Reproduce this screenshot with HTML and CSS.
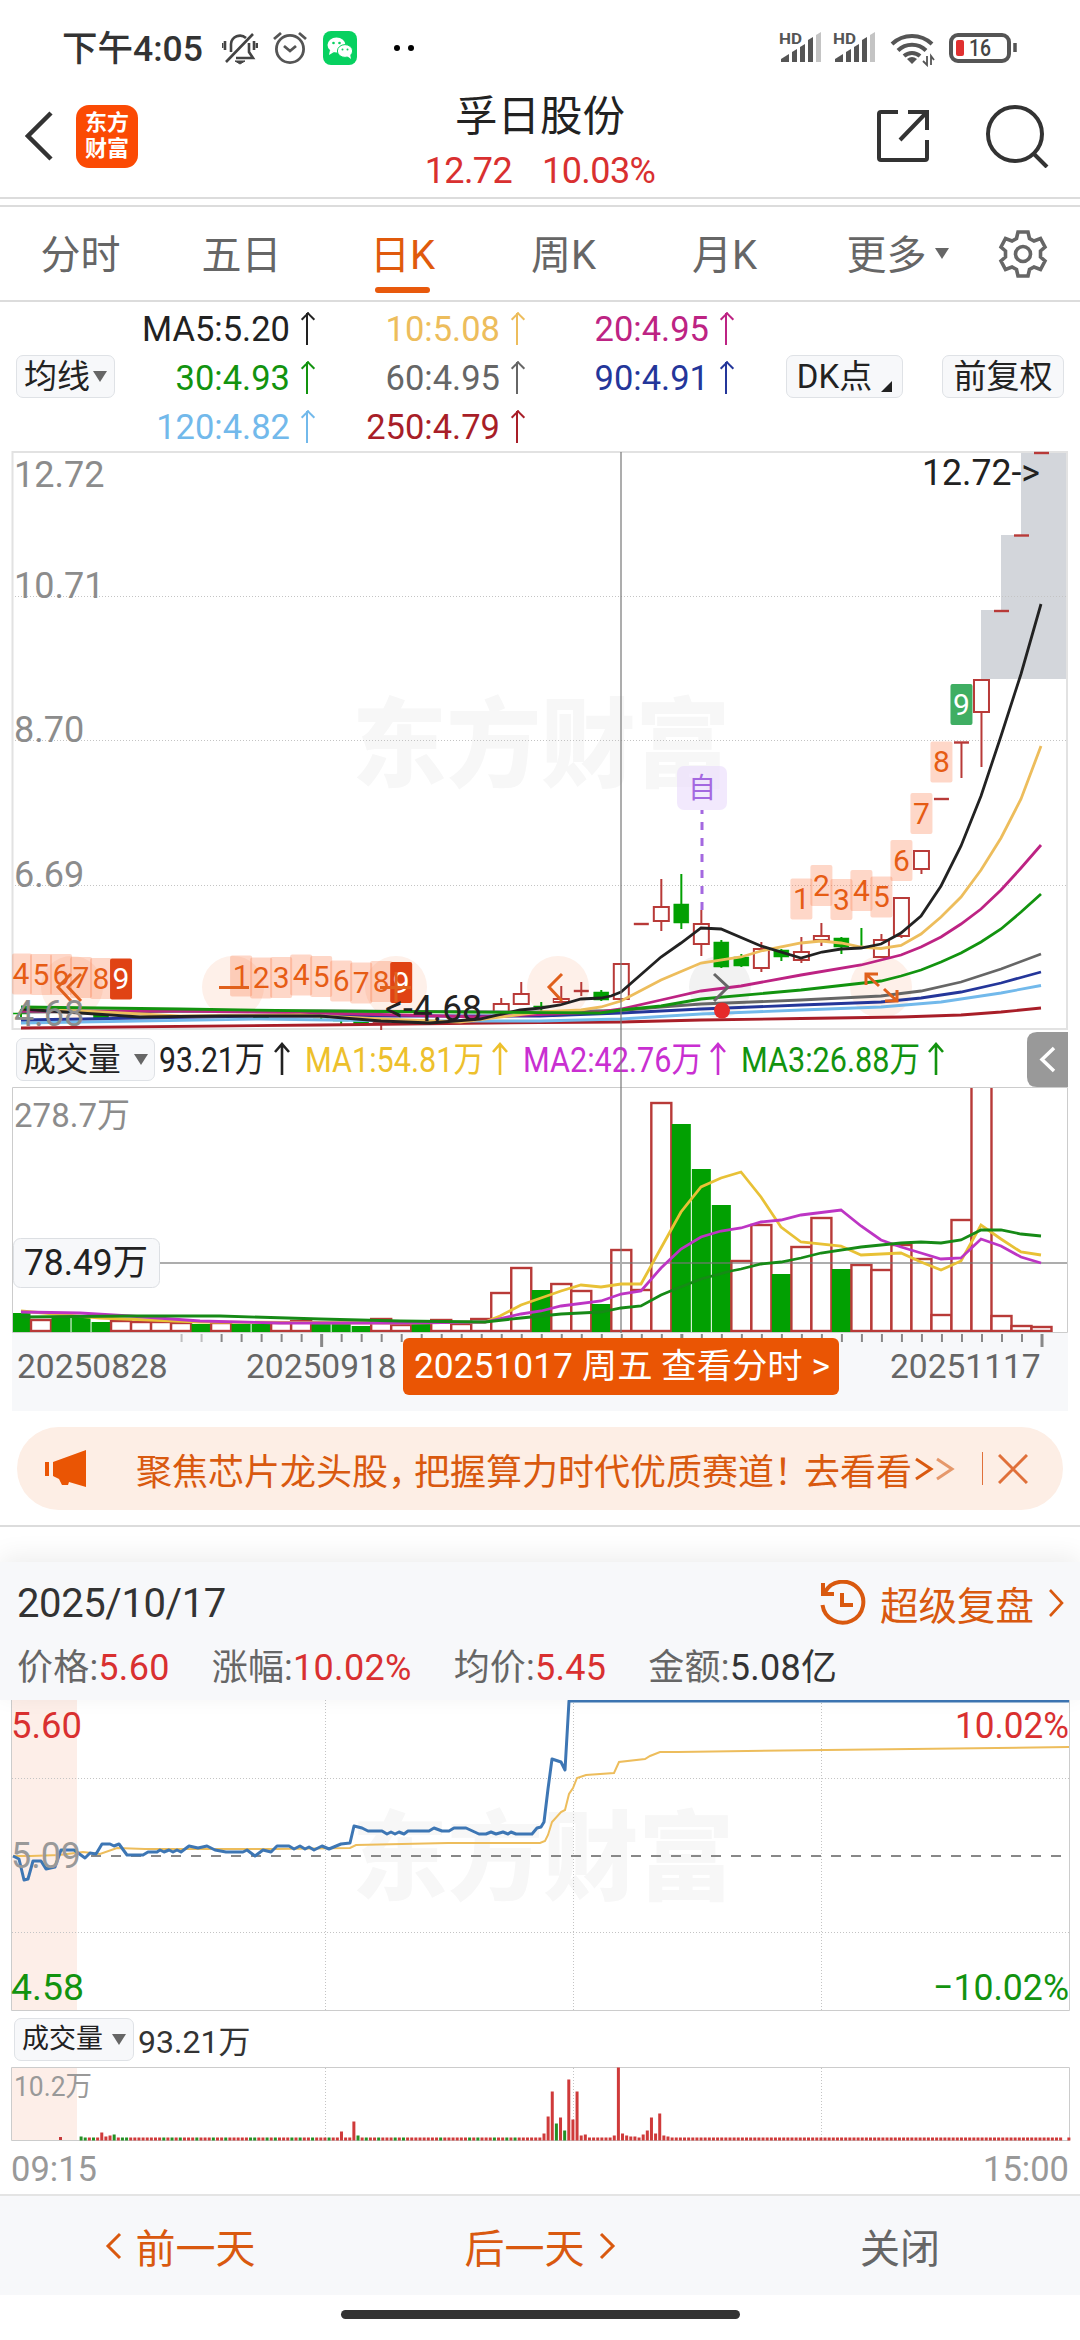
FILE: index.html
```html
<!DOCTYPE html>
<html lang="zh-CN">

<head>
	<meta charset="utf-8">
	<meta name="viewport" content="width=device-width, initial-scale=1.0">

	<title>孚日股份</title>

	<link rel="stylesheet" href="styles.css">
</head>

<body>
	<div class="status">
		<span class="clock">下午4:05</span>
		<svg class="bell" width="36" height="34" viewBox="0 0 36 34" fill="none" stroke="#444" stroke-width="2.6">
			<path d="M9 21V13a9 9 0 0 1 15-6M27 12v9l4 6H14M31 3 4 31M3 10v9M32 10v9M0 12v5M35 12v5" />
			<path d="M13 30h10l-5 3z" fill="#444" stroke-width="1" />
		</svg>
		<svg class="alarm" width="36" height="34" viewBox="0 0 36 34" fill="none" stroke="#555" stroke-width="2.8">
			<circle cx="18" cy="18" r="13.6" />
			<path d="M2 8 9 2M34 8l-7-6M12 15l6 5 6-5" />
		</svg>
		<svg class="wechat" width="34" height="34" viewBox="0 0 34 34">
			<rect width="34" height="34" rx="8" fill="#07d160" />
			<ellipse cx="13.500" cy="14" rx="9" ry="7.600" fill="#fff" />
			<path d="m7 19-1 5 5-3z" fill="#fff" />
			<ellipse cx="22" cy="20" rx="7.600" ry="6.400" fill="#fff" stroke="#07d160" />
			<path d="m24 25 4 3-1-5z" fill="#fff" />
			<g fill="#07d160"><circle cx="10.500" cy="12" r="1.300" /><circle cx="16.500" cy="12" r="1.300" /><circle cx="19.500" cy="18.500" r="1" /><circle cx="24.500" cy="18.500" r="1" /></g>
		</svg>
		<svg class="dots" width="24" height="8"><circle cx="4" cy="4" r="3" /><circle cx="18" cy="4" r="3" /></svg>
		<svg class="radio" width="242" height="38" viewBox="778 28 242 38">
			<g id="signal">
				<text x="779" y="42.500" class="hd" textLength="23">HD</text>
				<g fill="#555"><path d="M781 61v-3l8-5v8z" /><path d="M792 61V51l5-3v13z" /><path d="M800 61V46l5-3v18z" /><path d="M808 61V39l5-3v25z" /></g>
				<path d="M816 61V34l5-3v30z" fill="#c4c4c4" />
			</g>
			<use href="#signal" x="54" />
			<g fill="none" stroke="#555" stroke-width="4"><path d="M892 43a29 29 0 0 1 40 0M898 49.500a20 20 0 0 1 28 0M904 55a12 12 0 0 1 16 0" /></g>
			<path d="m907 58q5-4 10 0l-5 5z" fill="#555" />
			<path d="M927 55v9l-4-4M931 64v-9l3 4" fill="none" stroke="#555" stroke-width="1.800" />
			<rect x="951" y="34" width="58" height="26" rx="7" fill="none" stroke="#555" stroke-width="4" />
			<rect x="956" y="39" width="8" height="16" rx="2" fill="#e03030" />
			<path d="M1015 42v9" stroke="#555" stroke-width="3.500" />
			<text x="969" y="55" class="battery" textLength="22">16</text>
		</svg>
	</div>

	<header class="header">
		<svg width="28" height="52" viewBox="0 0 28 52" fill="none" stroke="#333" stroke-width="4.500"><path d="M26 3 3 26l23 23" /></svg>
		<div class="logo">东方<br>财富</div>
		<div class="stock">
			<h1>孚日股份</h1>
			<p><span>12.72</span><span>10.03%</span></p>
		</div>
		<svg class="share" width="54" height="54" viewBox="0 0 54 54" fill="none" stroke="#333" stroke-width="4"><path d="M22 3H5Q3 3 3 5V49Q3 51 5 51H49Q51 51 51 49V31M32 3H51V21M50 4 24 31" /></svg>
		<svg class="search" width="64" height="64" viewBox="0 0 64 64" fill="none" stroke="#333" stroke-width="4"><circle cx="30" cy="30" r="27" /><path d="m48 49 14 14" /></svg>
	</header>

	<nav class="tabs">
		<a>分时</a>
		<a>五日</a>
		<a class="active">日K</a>
		<a>周K</a>
		<a>月K</a>
		<a class="more">更多<i class="caret"></i></a>
		<svg width="50" height="50" viewBox="-25 -25 50 50" fill="none" stroke="#666" stroke-width="3.600">
			<path d="M-5-22H5L6.500-15.500 11-13 17.500-15.500 22-7 17.500-3V3L22 7 17.500 15.500 11 13 6.500 15.500 5 22H-5L-6.500 15.500-11 13-17.500 15.500-22 7-17.500 3V-3L-22-7-17.500-15.500-11-13-6.500-15.500Z" />
			<circle r="7.500" />
		</svg>
	</nav>

	<section class="averages">
		<button class="chip chip-ma">均线<i class="caret"></i></button>
		<div class="ma-grid">
			<span class="ma5">MA5:5.20<i class="up"></i></span>
			<span class="ma10">10:5.08<i class="up"></i></span>
			<span class="ma20">20:4.95<i class="up"></i></span>
			<span class="ma30">30:4.93<i class="up"></i></span>
			<span class="ma60">60:4.95<i class="up"></i></span>
			<span class="ma90">90:4.91<i class="up"></i></span>
			<span class="ma120">120:4.82<i class="up"></i></span>
			<span class="ma250">250:4.79<i class="up"></i></span>
		</div>
		<button class="chip chip-dk">DK点<i class="corner"></i></button>
		<button class="chip chip-fq">前复权</button>
	</section>

	<!-- daily candles -->
	<svg class="chart" width="1080" height="579" viewBox="0 452 1080 579">
		<text class="watermark" x="352" y="780" textLength="378">东方财富</text>
		<g fill="#d3d6db"><path d="M1021 453h46v227h-86v-69h20v-75h20z" /></g>
		<path class="dotted" d="M12 597.500H1067M12 741.500H1067M12 886.500H1067" />
		<path d="M12.500 1030V453H1067V1030Z" fill="none" stroke="#e2e2e2" stroke-width="2" />
		<g fill="#fef0e9"><circle cx="72" cy="988" r="31" /><circle cx="233" cy="988" r="31" /><circle cx="396" cy="988" r="31" /><circle cx="558" cy="988" r="31" /><circle cx="881" cy="988" r="31" /></g>
		<circle cx="720" cy="988" r="31" fill="#f2f2f2" />
		<g id="candles"></g>
		<g id="tags"></g>
		<g id="ma-lines" fill="none" stroke-width="2.800"></g>
		<g fill="none" stroke="#e0601c" stroke-width="3">
			<path d="M71 975 58 988l13 14M81 975 68 988l13 14M219 988.500h30M380 988.500h31M396 973v30M562 975 549 988l13 14" />
			<path d="M866 986V975h12M867 976l12 11M897 991v11h-12M896 1001l-12-11" />
			<path d="M714 975l14 13-14 14" stroke="#666" />
		</g>
		<circle cx="722" cy="1011.500" r="8" fill="#e52a2a" />
		<path d="M702 811V911" stroke="#a468e0" stroke-width="3" stroke-dasharray="8 8" stroke-dashoffset="4" />
		<rect x="677" y="767" width="50" height="44" rx="7" fill="#e9dbfb" fill-opacity=".6" />
		<text x="688" y="799" font-size="28" fill="#a468e0">自</text>
		<g class="scale">
			<text x="14" y="488">12.72</text>
			<text x="14" y="599">10.71</text>
			<text x="14" y="743">8.70</text>
			<text x="14" y="888">6.69</text>
			<text x="14" y="1027">4.68</text>
		</g>
		<text x="922" y="486" class="mark" textLength="118">12.72-&gt;</text>
		<text x="385" y="1022" class="mark" textLength="97">&lt;-4.68</text>
		<path d="M621 453V1031" class="cross" />
	</svg>

	<section class="vol-head">
		<button class="chip chip-vol">成交量<i class="caret"></i></button>
		<svg width="1080" height="58" viewBox="156 1030 1080 58">
			<g class="vol-ma">
				<text x="159" y="1072" fill="#222" textLength="106">93.21万</text>
				<text x="305" y="1072" fill="#edc02c" textLength="179">MA1:54.81万</text>
				<text x="523" y="1072" fill="#c92fd1" textLength="179">MA2:42.76万</text>
				<text x="741" y="1072" fill="#12930f" textLength="179">MA3:26.88万</text>
			</g>
			<g fill="none" stroke-width="2.600">
				<path d="M282 1075V1045M275 1052l7-8 7 8" stroke="#222" />
				<path d="M500 1075V1045M493 1052l7-8 7 8" stroke="#edc02c" />
				<path d="M718 1075V1045M711 1052l7-8 7 8" stroke="#c92fd1" />
				<path d="M936 1075V1045M929 1052l7-8 7 8" stroke="#12930f" />
			</g>
			<path d="M621 1030V1088" class="cross" />
			<path d="M1068 1032h-31q-10 0-10 10v35q0 10 10 10h31z" fill="#999" />
			<path d="m1054 1048-12 11.500 12 11.500" fill="none" stroke="#fff" stroke-width="3.500" />
		</svg>
	</section>

	<!-- daily volume and date axis -->
	<svg class="chart" width="1080" height="324" viewBox="0 1088 1080 324">
		<rect x="12" y="1334" width="1056" height="78" fill="#f7f8fa" />
		<path d="M12.500 1333.500V1088.500H1067.500V1333.500Z" fill="none" stroke="#ccc" />
		<clipPath id="vol-clip"><rect x="13" y="1089" width="1054" height="244" /></clipPath>
		<g id="volumes" clip-path="url(#vol-clip)"></g>
		<path d="M621 1088V1334M160 1264H1067" class="cross" />
		<g id="vol-lines" fill="none" stroke-width="2.800"></g>
		<g id="ticks" stroke="#888" stroke-width="2"></g>
		<text x="14" y="1128" font-size="34" fill="#8c8c8c" textLength="116">278.7万</text>
		<rect x="13.500" y="1239.500" width="146" height="49" rx="7" fill="#f7f8fa" stroke="#dcdfe3" />
		<text x="24" y="1276" font-size="36" fill="#222" textLength="124">78.49万</text>
		<g font-size="33.500" fill="#666">
			<text x="17" y="1379">20250828</text>
			<text x="246" y="1379">20250918</text>
			<text x="890" y="1379">20251117</text>
		</g>
		<rect x="403" y="1339" width="436" height="57" rx="6" fill="#ea5504" />
		<text x="414" y="1379" font-size="34.500" fill="#fff" textLength="416">20251017 周五 查看分时 &gt;</text>
	</svg>

	<div class="banner">
		<svg width="44" height="40" viewBox="43 1450 44 40" fill="#ea5504"><path d="M45 1463h4v14h-4zM53 1463l33-12v37l-17-5-1 3h-6l-3-6-6-3z" /></svg>
		<p>聚焦芯片龙头股<i class="comma">，</i>把握算力时代优质赛道<i class="bang">！</i>去看看<svg width="40" height="24" viewBox="0 0 40 24" fill="none" stroke-width="3"><path d="m1 2 15 10L1 22" stroke="#d9590f" /><path d="m22 2 15 10-15 10" stroke="#e5986b" /></svg></p>
		<svg class="close" width="30" height="30" viewBox="0 0 30 30" fill="none" stroke="#e0703a" stroke-width="3"><path d="m1 1 28 28M29 1 1 29" /></svg>
	</div>

	<section class="day">
		<div class="day-head">
			<h2>2025/10/17</h2>
			<a class="replay">
				<svg width="46" height="46" viewBox="0 0 46 46" fill="none" stroke="#d9590f" stroke-width="4"><path d="M5 12A20.500 20.500 0 1 1 2.500 25M3 3v11h11M22 13v12h11" /></svg>
				超级复盘
				<svg width="16" height="30" viewBox="0 0 16 30" fill="none" stroke="#d9590f" stroke-width="2.600"><path d="m2 2 12 13L2 28" /></svg>
			</a>
		</div>
		<p class="day-stats">
			<span>价格:<b class="red">5.60</b></span>
			<span>涨幅:<b class="red">10.02%</b></span>
			<span>均价:<b class="red">5.45</b></span>
			<span>金额:<b>5.08亿</b></span>
		</p>
	</section>

	<svg class="chart" width="1080" height="311" viewBox="0 1701 1080 311">
		<rect x="12" y="1701" width="65" height="310" fill="#fdeee8" />
		<text class="watermark" x="352" y="1893" textLength="382">东方财富</text>
		<path class="dotted" d="M12 1779.500H1069M12 1933.500H1069M325.500 1701V2011M573.500 1701V2011M821.500 1701V2011" />
		<path d="M11.500 1701V2011.500H1069.500V1701" fill="none" stroke="#ccc" />
		<path d="M91 1857H1062" stroke="#888" stroke-width="2" stroke-dasharray="10 10" />
		<polyline fill="none" stroke="#edbd5c" stroke-width="2" points="13,1857 31,1857 59,1856 83,1853 100,1855 117,1849 145,1850 275,1850 350,1849 356,1846 448,1844 540,1844 545,1842 548,1836 552,1823 561,1813 565,1811 569,1795 573,1789 577,1779 586,1776 614,1774 619,1763 645,1760 650,1757 660,1753 678,1753 826,1751 1069,1748" />
		<polyline fill="none" stroke="#3d76b4" stroke-width="3" stroke-linejoin="round" points="13,1857 19,1860 24,1881 28,1880 33,1862 41,1862 46,1870 55,1868 61,1851 74,1851 85,1859 90,1854 96,1855 102,1845 110,1845 114,1847 119,1845 127,1856 143,1856 148,1853 157,1853 160,1851 164,1853 169,1851 173,1853 177,1851 181,1853 189,1847 198,1849 207,1847 215,1851 226,1853 243,1853 247,1851 255,1857 263,1851 271,1853 277,1847 289,1847 294,1850 300,1847 305,1850 309,1848 314,1851 322,1847 329,1850 341,1845 350,1844 354,1827 362,1829 368,1832 382,1832 387,1835 391,1833 395,1835 399,1833 404,1835 408,1832 429,1832 434,1829 442,1832 449,1832 454,1829 466,1829 479,1835 486,1835 491,1833 496,1835 503,1833 508,1835 511,1833 516,1835 532,1835 537,1829 541,1828 544,1823 548,1790 552,1760 561,1763 565,1771 569,1702 1069,1702" />
		<g class="range">
			<text x="11" y="1739" fill="#d93030" textLength="71">5.60</text>
			<text x="11" y="1869" fill="#999" textLength="70">5.09</text>
			<text x="11" y="2001" fill="#12930f" textLength="73">4.58</text>
			<text x="955" y="1739" fill="#d93030" textLength="114">10.02%</text>
			<text x="933" y="2001" fill="#12930f" textLength="136">−10.02%</text>
		</g>
	</svg>

	<section class="min-head">
		<button class="chip chip-min">成交量<i class="caret"></i></button>
		<span>93.21万</span>
	</section>

	<svg class="chart" width="1080" height="74" viewBox="0 2068 1080 74">
		<rect x="12" y="2069" width="65" height="73" fill="#fdeee8" />
		<path class="dotted" d="M325.500 2069V2141M573.500 2069V2141M821.500 2069V2141" />
		<path d="M11.500 2141.500V2068.500H1069.500V2141.500Z" fill="none" stroke="#ccc" />
		<g id="minutes"></g>
		<text x="14" y="2097" font-size="28" fill="#999" textLength="78">10.2万</text>
	</svg>
	<div class="times"><span>09:15</span><span>15:00</span></div>

	<footer class="footer">
		<a><svg width="17" height="28" viewBox="0 0 17 28" fill="none" stroke="#d9590f" stroke-width="3"><path d="M15 2 3 14l12 12" /></svg>前一天</a>
		<a>后一天<svg width="17" height="28" viewBox="0 0 17 28" fill="none" stroke="#d9590f" stroke-width="3"><path d="m2 2 12 12L2 26" /></svg></a>
		<a class="dismiss">关闭</a>
	</footer>
	<div class="home"></div>

	<script src="chart.js"></script>
</body>

</html>
```
FILE: styles.css
```css
* {
	box-sizing: border-box;
}

body {
	background-color: #fff;
	color: #222;
	font-family: Roboto, 'Noto Sans CJK SC', sans-serif;
	margin: 0;
	overflow: hidden;
	width: 1080px;
}

h1, h2, p {
	font-weight: 400;
	margin: 0;
}

svg {
	display: block;
	flex: none;
}

text {
	font-family: Roboto, 'Noto Sans CJK SC', sans-serif;
}

.caret {
	border: 7px solid transparent;
	border-bottom-width: 0;
	border-top: 11px solid #666;
	display: inline-block;
}

/* status bar */
.status {
	align-items: center;
	display: flex;
	height: 80px;
	padding: 15px 60px 0 62px;
}
.clock {
	color: #333;
	font-size: 35.5px;
	font-weight: 500;
	line-height: 48px;
	padding-top: 2px;
	width: 160px;
}
.alarm {
	margin-left: 14px;
}
.wechat {
	margin-left: 15px;
}
.dots {
	margin-left: 36px;
}
.radio {
	margin-left: auto;
}
.hd {
	fill: #555;
	font-size: 15px;
	font-weight: 700;
}
.battery {
	fill: #444;
	font-size: 23px;
	font-weight: 500;
}

/* header */
.header {
	align-items: center;
	border-bottom: 2px solid #dcdcdc;
	display: flex;
	height: 119px;
	padding: 0 31px 0 25px;
}
.header > svg:first-child {
	margin-top: -5px;
}
.logo {
	background-color: #fb4a04;
	border-radius: 13px;
	color: #fff;
	font-size: 22px;
	font-weight: 700;
	height: 63px;
	line-height: 26px;
	margin: -5px 0 0 23px;
	padding-top: 5px;
	text-align: center;
	width: 62px;
}
.stock {
	flex: 1;
	padding: 5px 0 0 66px;
	text-align: center;
}
.stock h1 {
	font-size: 42.5px;
	line-height: 56px;
}
.stock p {
	color: #d93030;
	display: flex;
	font-size: 36px;
	gap: 30px;
	justify-content: center;
	letter-spacing: -.6px;
	line-height: 44px;
	margin-top: 4px;
}
.share {
	margin: -5px 55px 0 0;
}
.search {
	margin-top: -5px;
}

/* tabs */
.tabs {
	align-items: center;
	border-bottom: 2px solid #dcdcdc;
	border-top: 2px solid #dcdcdc;
	color: #666;
	display: grid;
	font-size: 40px;
	grid-template-columns: repeat(6, 161px) 1fr;
	height: 97px;
	justify-items: center;
	margin-top: 6px;
}
.tabs a {
	height: 93px;
	line-height: 98px;
}
.tabs .active {
	color: #e05a0c;
	display: flex;
	flex-direction: column;
}
.tabs .active::after {
	align-self: center;
	background-color: #e8590c;
	border-radius: 3px;
	content: '';
	flex: none;
	height: 6px;
	margin-top: -18px;
	width: 55px;
}
.tabs .more {
	padding-left: 24px;
	white-space: nowrap;
}
.tabs .more .caret {
	margin-left: 8px;
	vertical-align: 10px;
}

/* moving averages */
.averages {
	align-items: center;
	display: flex;
	height: 149px;
	padding: 0 16px;
}
.chip {
	align-items: center;
	background-color: #f7f8fa;
	border: 1px solid #dfe2e6;
	border-radius: 7px;
	color: #222;
	display: flex;
	flex: none;
	font: 33px Roboto, 'Noto Sans CJK SC', sans-serif;
	height: 43px;
	justify-content: center;
	line-height: 40px;
	padding: 0;
	white-space: nowrap;
}
.chip-ma {
	width: 99px;
}
.chip-ma .caret {
	margin-left: 3px;
}
.chip-dk {
	margin-left: 49px;
	width: 117px;
}
.chip-fq {
	margin-left: 39px;
	width: 122px;
}
.corner {
	align-self: flex-end;
	border-bottom: 11px solid #222;
	border-left: 11px solid transparent;
	margin: 0 0 5px 9px;
}
.ma-grid {
	display: grid;
	font-size: 34.5px;
	grid-template-columns: 201px 209px 209px;
	grid-template-rows: repeat(3, 49px);
	line-height: 49px;
	padding-top: 3px;
	width: 623px;
}
.ma-grid span {
	align-items: center;
	display: flex;
	justify-content: flex-end;
	white-space: nowrap;
}
.up {
	background: linear-gradient(currentColor, currentColor) center / 2px 100% no-repeat;
	display: inline-block;
	height: 32px;
	margin: 0 2px 0 11px;
	position: relative;
	width: 12px;
}
.up::before {
	border-left: 2px solid;
	border-top: 2px solid;
	content: '';
	height: 8px;
	left: 2px;
	position: absolute;
	top: 1px;
	transform: rotate(45deg);
	width: 8px;
}
.ma5, .ma30, .ma120 { margin-right: 1px; }
.ma10 { color: #edbd5c; }
.ma20 { color: #bd2383; }
.ma30 { color: #12930f; }
.ma60 { color: #666; }
.ma90 { color: #24369a; }
.ma120 { color: #72b9eb; }
.ma250 { color: #a81e28; }

/* charts */
.watermark {
	fill: #f7f7f7;
	font-size: 97px;
	font-weight: 900;
}
.dotted {
	fill: none;
	stroke: #c4c4c4;
	stroke-dasharray: 1 2;
}
.cross {
	stroke: #777;
	stroke-opacity: .6;
	stroke-width: 2;
}
.scale {
	fill: #8c8c8c;
	font-size: 36px;
}
.mark {
	fill: #222;
	font-size: 36px;
}
.tag {
	font-size: 30px;
	text-anchor: middle;
}
.range {
	font-size: 37px;
}
.vol-head {
	display: flex;
	height: 57px;
	overflow: hidden;
	padding-left: 16px;
}
.chip-vol {
	font-size: 32.5px;
	margin: 8px 1px 0 0;
	width: 139px;
}
.chip-vol .caret {
	margin-left: 13px;
}
.vol-ma {
	font-size: 35px;
}

/* banner */
.banner {
	align-items: center;
	background-color: #fdeee5;
	border-radius: 42px;
	color: #d9590f;
	display: flex;
	height: 83px;
	margin: 16px 17px 0;
	padding: 0 35px 0 26px;
}
.banner p {
	align-items: center;
	display: flex;
	flex: 1;
	font-size: 36px;
	margin-left: 49px;
	white-space: nowrap;
}
.banner p svg {
	margin-left: 3px;
}
.comma, .bang {
	font-style: normal;
	width: 26px;
}
.bang {
	width: 30px;
}
.banner::after {
	background-color: #e0703a;
	content: '';
	height: 33px;
	order: 1;
	width: 1px;
}
.banner .close {
	margin-left: 15px;
	order: 2;
}

/* selected day */
.day {
	background-color: #f7f8fa;
	box-shadow: 0 -6px 24px rgba(0, 0, 0, .07);
	height: 138px;
	margin-top: 52px;
	padding: 14px 16px 0 17px;
	position: relative;
}
.day::before {
	border-top: 2px solid #dcdcdc;
	content: '';
	left: 0;
	position: absolute;
	top: -37px;
	width: 1080px;
}
.day-head {
	align-items: center;
	display: flex;
	height: 54px;
	justify-content: space-between;
}
.day h2 {
	color: #333;
	font-size: 40px;
	letter-spacing: -.4px;
}
.replay {
	align-items: center;
	color: #d9590f;
	display: flex;
	font-size: 38.5px;
	gap: 14px;
}
.day-stats {
	color: #666;
	display: flex;
	font-size: 36px;
	gap: 42px;
	letter-spacing: .2px;
	line-height: 50px;
	margin-top: 13px;
}
.day-stats b {
	color: #333;
	font-weight: 400;
	letter-spacing: .3px;
}
.day-stats .red {
	color: #d93030;
}
.min-head {
	align-items: center;
	color: #333;
	display: flex;
	font-size: 32px;
	height: 56px;
	padding-left: 14px;
}
.chip-min {
	font-size: 27px;
	margin-right: 4px;
	width: 120px;
}
.chip-min .caret {
	margin-left: 9px;
}
.times {
	color: #999;
	display: flex;
	font-size: 34.5px;
	height: 53px;
	justify-content: space-between;
	line-height: 56px;
	padding: 0 11px;
}

/* footer */
.footer {
	align-items: center;
	background-color: #f7f8fa;
	border-top: 2px solid #e4e4e4;
	color: #d9590f;
	display: grid;
	font-size: 40px;
	grid-template-columns: repeat(3, 1fr);
	height: 101px;
	justify-items: center;
}
.footer a {
	align-items: center;
	display: flex;
	gap: 14px;
}
.footer .dismiss {
	color: #666;
}
.home {
	background-color: #333;
	border-radius: 5px;
	height: 9px;
	margin: 15px auto 0;
	width: 399px;
}
```
FILE: chart.js
```js
const NS = 'http://www.w3.org/2000/svg';
const RED = '#b83a38';
const GREEN = '#02a002';

function add(parent, name, attrs, text) {
	const el = document.createElementNS(NS, name);
	for (const [key, value] of Object.entries(attrs)) el.setAttribute(key, value);
	if (text) el.textContent = text;
	document.getElementById(parent).appendChild(el);
}

const barX = i => 21 + 20.01 * i;

for (const text of document.querySelectorAll('text[textLength]')) {
	text.setAttribute('lengthAdjust', 'spacingAndGlyphs');
}

// [index, colour, high, body top, body bottom, low]
const candles = [
	[0, 'g', 1010, 1014, 1015, 1018], [4, 'g', 1012, 1016, 1019, 1020], [12, 'g', 1017, 1018, 1019, 1021],
	[15, 'g', 1018, 1020, 1021, 1022], [16, 'g', 1019, 1021, 1022, 1025], [17, 'g', 1021, 1022, 1025, 1025],
	[18, 'r', 1021, 1022, 1024, 1031], [24, 'r', 999, 1005, 1013, 1013], [25, 'r', 983, 995, 1005, 1005],
	[26, 'g', 1003, 1007, 1008, 1012], [27, 'r', 987, 1000, 1003, 1003], [28, 'r', 983, 992, 992, 997],
	[29, 'g', 991, 993, 1001, 1002], [30, 'r', 965, 965, 1000, 1000], [31, 'r', 925, 925, 925, 925],
	[32, 'r', 880, 908, 922, 932], [33, 'g', 875, 905, 924, 930], [34, 'r', 911, 925, 945, 957],
	[35, 'g', 941, 943, 968, 969], [36, 'g', 955, 958, 967, 968], [37, 'r', 943, 950, 969, 973],
	[38, 'g', 950, 951, 958, 962], [39, 'r', 938, 953, 961, 964], [40, 'r', 924, 937, 941, 947],
	[41, 'g', 938, 939, 948, 955], [42, 'g', 929, 948, 949, 950], [43, 'r', 935, 941, 958, 958],
	[44, 'r', 899, 899, 937, 939], [45, 'r', 851, 852, 870, 875], [46, 'r', 800, 800, 800, 800],
	[47, 'r', 743, 743.5, 743.5, 779], [48, 'r', 680, 681, 713, 768], [49, 'r', 612, 612, 612, 612],
	[50, 'r', 536.5, 536.5, 536.5, 536.5], [51, 'r', 454, 454, 454, 454],
];

for (const [i, type, high, top, bottom, low] of candles) {
	const x = barX(i);
	const color = type === 'r' ? RED : GREEN;
	add('candles', 'path', { d: `M${x} ${high}V${top}M${x} ${bottom}V${low}`, stroke: color, 'stroke-width': 2 });
	if (top === bottom) {
		add('candles', 'path', { d: `M${x - 7.5} ${top}h15`, stroke: color, 'stroke-width': 2.4 });
	} else {
		add('candles', 'rect', { x: x - 7.5, y: top, width: 15, height: bottom - top, fill: type === 'r' ? '#fff' : GREEN, stroke: color, 'stroke-width': type === 'r' ? 2 : .5 });
	}
}

// nine-turn counters: [index, label, top]
const tags = [
	[0, 4, 954.5], [1, 5, 955], [2, 6, 955], [3, 7, 958], [4, 8, 959], [5, 9, 959.5, '#e04314'],
	[11, 1, 956.5], [12, 2, 958.5], [13, 3, 958], [14, 4, 955.5], [15, 5, 957], [16, 6, 961.5], [17, 7, 963.5], [18, 8, 962], [19, 9, 963, '#e04314'],
	[39, 1, 879.5], [40, 2, 866], [41, 3, 880], [42, 4, 871], [43, 5, 877.5], [44, 6, 841], [45, 7, 794], [46, 8, 742.5], [47, 9, 685, '#3fae63'],
];

for (const [i, label, top, fill] of tags) {
	const left = Math.max(12, barX(i) - 11);
	add('tags', 'rect', { x: left, y: top, width: barX(i) + 11 - left, height: 41, rx: 2, fill: fill || '#fa6d33', 'fill-opacity': fill ? 1 : .27 });
	add('tags', 'text', { x: barX(i), y: top + 30.5, class: 'tag', fill: fill ? '#fff' : '#e65c14' }, String(label));
}

const maLines = {
	'#a81e28': '21,1029 320,1026 540,1023.5 621,1023 701,1021 801,1019.5 901,1018 961,1016 1001,1013 1041,1009',
	'#72b9eb': '21,1024 260,1020 400,1022 540,1022 621,1020 701,1015 801,1011 881,1008 941,1003 1001,994 1041,986.5',
	'#24369a': '21,1021 260,1017 540,1017 621,1014 701,1010 801,1006 881,1003 921,999 961,993 1001,984 1041,973',
	'#666': '21,1013 320,1012 540,1013 621,1011.5 661,1008 701,1005 801,1001 881,997 921,992 961,983 1001,970 1041,955',
	'#bd2383': '21,1012 180,1012 320,1014 400,1016 480,1018 600,1013 621,1010 661,1001 701,992 741,987 801,976 861,966 881,961 901,956 921,948 941,938 961,925 981,910 1001,891 1021,869 1041,846',
	'#edbd5c': '21,1010 80,1012 180,1017 300,1016 381,1020 460,1023 541,1013 581,1011 601,1008 621,1002 661,981 701,964 741,958 761,952 801,944 821,942 841,944 861,948 881,949.5 901,946.5 921,935 941,918 961,898 981,871 1001,839 1021,800 1041,747',
	'#222': '21,1010 80,1014 140,1018 220,1017 320,1017 381,1022 430,1024 480,1020 520,1011 541,1009 560,1006 581,1000 601,999 611,997 621,993 661,958 681,944 701,929 721,930 761,947 801,959 822,953 841,950 861,949 881,945 901,934 921,917 941,887 961,847 981,797 1001,737 1021,675 1041,605',
	'#12930f': '21,1008 180,1010 320,1012 600,1014 621,1011 661,1007 701,1000 801,991 881,982 901,977 921,971 941,963 961,954 981,943 1001,930 1021,913 1041,895',
};
for (const [stroke, points] of Object.entries(maLines)) add('ma-lines', 'polyline', { stroke, points });

// top edge of every volume bar
const volumes = 'g1314 r1321 g1319 g1319 g1323 r1322 r1323 r1323 r1324 g1325 r1324 g1325 g1325 r1324 r1322 g1325 g1325 g1327 r1320 r1326 g1325 r1321 r1325 r1320 r1294 r1269 g1291 r1285 r1292 g1305 r1251 r1291 r1104 g1125 g1170 g1206 r1262 r1226 g1275 r1248 r1219 g1270 r1266 r1271 r1246 r1260 r1316 r1221 r1080 r1317 r1327 r1328'.split(' ');
volumes.forEach((bar, i) => {
	const top = Number(bar.slice(1));
	const x = barX(i);
	if (bar[0] === 'g') add('volumes', 'rect', { x: x - 9.5, y: top, width: 19, height: 1333 - top, fill: GREEN });
	else add('volumes', 'rect', { x: x - 10, y: top, width: 20, height: 1332 - top, fill: '#fff', stroke: RED, 'stroke-width': 2.4 });
});

const volLines = {
	'#e8c136': '21,1312 100,1319 200,1323 400,1324 485,1323 500,1317 521,1306 541,1299 561,1292 581,1286 601,1288 621,1285 641,1285 661,1249 681,1213 701,1188 721,1179 741,1173 761,1198 781,1228 801,1243 841,1247 861,1256 901,1254 921,1263 941,1271 961,1262 981,1226 1001,1240 1021,1253 1041,1256',
	'#bd35c4': '21,1313 80,1314 130,1317 200,1322 280,1324 400,1324 485,1323 521,1315 541,1312 561,1307 601,1302 621,1295 641,1292 661,1269 681,1250 701,1238 721,1232 741,1229 761,1223 781,1221 801,1216 841,1211 861,1227 881,1241 901,1248 921,1254 941,1260 961,1259 981,1240 1001,1247 1021,1258 1041,1264',
	'#168a16': '21,1318 130,1317 220,1317 320,1320 400,1322 485,1323 521,1319 561,1315 601,1313 621,1309 641,1307 661,1296 673,1291 701,1280 731,1272 741,1270 761,1265 781,1263 801,1259 821,1254 861,1248 901,1244 921,1243 941,1244 961,1241 981,1231 1001,1231 1021,1235 1041,1237',
};
for (const [stroke, points] of Object.entries(volLines)) add('vol-lines', 'polyline', { stroke, points });

for (let i = 8; i < 52; i++) {
	const major = [15, 33, 51].includes(i);
	add('ticks', 'path', { d: `M${barX(i) + .5} 1335v${major ? 13 : 8}`, 'stroke-width': major ? 3 : 2, opacity: i < 10 ? .5 : 1 });
}

// minute volume, 3px unless listed
const peaks = { 0: 4, 5: 8, 6: 4, 7: 5, 8: 6, 63: 9, 66: 19, 67: 5, 112: 7, 113: 24, 114: 49, 115: 17, 116: 23, 117: 10, 118: 61, 119: 21, 120: 49, 121: 5, 122: 6, 129: 5, 130: 73, 131: 7, 132: 5, 133: 4, 134: 4, 136: 6, 137: 10, 138: 23, 139: 7, 140: 27, 141: 5, 142: 4 };
const falls = [0, 1, 3, 8, 10, 11, 20, 22, 24, 28, 32, 35, 41, 42, 45, 47, 51, 53, 56, 60, 67, 69, 72, 76, 78, 87, 94, 96, 100, 103, 105, 115, 117];
add('minutes', 'rect', { x: 59, y: 2138, width: 3, height: 3, fill: '#c63a3a' });
for (let k = 0; k < 240; k++) {
	if (k === 238) continue;
	const h = peaks[k] || 3;
	add('minutes', 'rect', { x: 79.6 + 4.133 * k, y: 2141.5 - h, width: 3, height: h, fill: falls.includes(k) ? '#259025' : '#cf3a3a' });
}
```
